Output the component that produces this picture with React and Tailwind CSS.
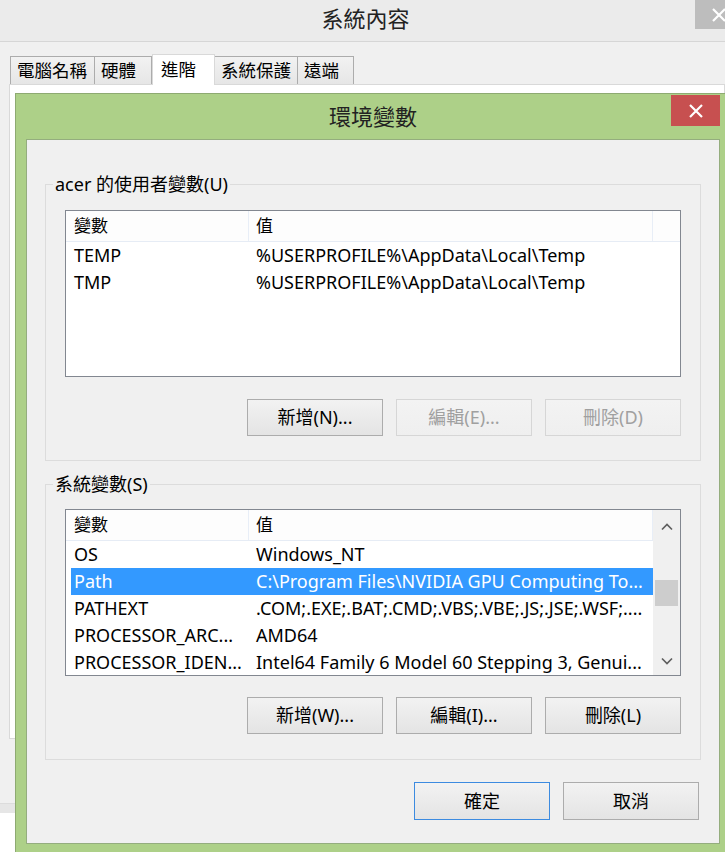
import React from "react";

const userVars = [
  { name: "TEMP", value: "%USERPROFILE%\\AppData\\Local\\Temp" },
  { name: "TMP", value: "%USERPROFILE%\\AppData\\Local\\Temp" },
];

const sysVars = [
  { name: "OS", value: "Windows_NT" },
  { name: "Path", value: "C:\\Program Files\\NVIDIA GPU Computing To...", selected: true },
  { name: "PATHEXT", value: ".COM;.EXE;.BAT;.CMD;.VBS;.VBE;.JS;.JSE;.WSF;...." },
  { name: "PROCESSOR_ARC...", value: "AMD64" },
  { name: "PROCESSOR_IDEN...", value: "Intel64 Family 6 Model 60 Stepping 3, Genui..." },
];

const tabs = ["電腦名稱", "硬體", "進階", "系統保護", "遠端"];
const tabWidths = ["w-[85px]", "w-[58px]", "w-[63px]", "w-[84px]", "w-[57px]"];

// thin white X used on both close buttons
const CloseX = () => (
  <svg width="14" height="14" viewBox="0 0 14 14">
    <path d="M1 1 L13 13 M13 1 L1 13" stroke="#fff" strokeWidth="2.2" fill="none" />
  </svg>
);

const Chevron = ({ down }) => (
  <svg width="12" height="8" viewBox="0 0 12 8">
    <path
      d={down ? "M1 1.5 L6 6.5 L11 1.5" : "M1 6.5 L6 1.5 L11 6.5"}
      stroke="#5f5f5f"
      strokeWidth="1.7"
      fill="none"
    />
  </svg>
);

const WinButton = ({ children, disabled, primary, tall }) => (
  <div
    className={
      "w-[136px] flex items-center justify-center text-[18px] border bg-gradient-to-b from-[#f2f2f2] to-[#e4e4e4] " +
      (tall ? "h-[38px] " : "h-[37px] ") +
      (primary
        ? "border-[#3c8be0] text-black"
        : disabled
        ? "border-[#d6d6d6] from-[#f3f3f3] to-[#efefef] text-[#a0a0a0]"
        : "border-[#acacac] text-black")
    }
  >
    {children}
  </div>
);

const ListHeader = ({ full }) => (
  <div className="flex h-[31px] shrink-0 bg-[#fdfdfd] border-b border-[#e6ecf5] text-[17px]">
    <div className="w-[183px] pl-[8px] flex items-center border-r border-[#e8eef7]">變數</div>
    <div className="w-[404px] pl-[7px] flex items-center border-r border-[#e8eef7]">值</div>
    {full && <div className="flex-1" />}
  </div>
);

const Row = ({ v }) => (
  <div
    className={
      "flex h-[27px] ml-[5px] w-[582px] items-center whitespace-nowrap " +
      (v.selected ? "bg-[#3399ff] text-white" : "")
    }
  >
    <div className="w-[178px] pl-[3px] overflow-hidden">{v.name}</div>
    <div className="flex-1 pl-[7px] overflow-hidden">{v.value}</div>
  </div>
);

const GroupBox = ({ label, children, className }) => (
  <div className={"relative border border-[#dcdcdc] pl-[19px] pr-[19px] " + className}>
    <span className="absolute left-[7px] top-[-12px] px-[2px] bg-[#f0f0f0] text-[18px] leading-[22px]">
      {label}
    </span>
    {children}
  </div>
);

export default function App() {
  return (
    <div className="relative w-[725px] h-[852px] overflow-hidden bg-white text-black font-['Noto_Sans','Noto_Sans_CJK_TC',sans-serif] text-[18px]">
      {/* background window: 系統內容 */}
      <div className="flex flex-col h-[813px] bg-[#f0f0f0]">
        <div className="relative h-[42px] shrink-0 bg-[#ebebeb] border-b border-[#d6d6d6] flex items-center justify-center">
          <span className="text-[22px] text-[#222] pb-[5px] pl-[6px]">系統內容</span>
          <div className="absolute right-[-17px] top-0 w-[47px] h-[29px] bg-[#bdbdbd] flex items-center justify-center">
            <CloseX />
          </div>
        </div>
        <div className="flex items-end h-[42px] shrink-0 pl-[10px] text-[17.5px]">
          {tabs.map((t, i) =>
            i === 2 ? (
              <div
                key={t}
                className={tabWidths[i] + " relative z-10 h-[31px] mb-[-1px] bg-white border border-b-0 border-[#d9d9d9] pl-[8px] pt-[1px]"}
              >
                {t}
              </div>
            ) : (
              <div
                key={t}
                className={tabWidths[i] + " h-[28px] bg-gradient-to-b from-[#f2f2f2] to-[#e6e6e6] border border-[#acacac] border-b-0 pl-[6px] flex items-center -ml-px first:ml-0"}
              >
                {t}
              </div>
            )
          )}
        </div>
        <div className="ml-[9px] h-[655px] shrink-0 bg-white border border-[#d9d9d9]" />
        <div className="flex-1" />
        <div className="h-[10px] shrink-0 bg-[#e6e6e6] border-t border-[#dcdcdc]" />
      </div>

      {/* foreground dialog: 環境變數 */}
      <div className="absolute left-[15px] top-[93px] w-[716px] h-[775px] bg-[#add088] border border-[#8eaa72] px-[10px]">
        <div className="relative h-[45px] flex items-center justify-center">
          <span className="text-[22px] text-[#222] pb-[1px]">環境變數</span>
          <div className="absolute right-0 top-[1px] w-[49px] h-[31px] bg-[#c75050] flex items-center justify-center">
            <CloseX />
          </div>
        </div>

        <div className="h-[705px] bg-[#f0f0f0] border border-[#94ad7e] pt-[44px] pl-[18px] pr-[18px]">
          <GroupBox label="acer 的使用者變數(U)" className="pt-[25px] pb-[24px]">
            <div className="h-[167px] bg-white border border-[#828790]">
              <ListHeader full />
              {userVars.map((v) => (
                <Row key={v.name} v={v} />
              ))}
            </div>
            <div className="flex justify-end gap-[13px] mt-[22px]">
              <WinButton>新增(N)...</WinButton>
              <WinButton disabled>編輯(E)...</WinButton>
              <WinButton disabled>刪除(D)</WinButton>
            </div>
          </GroupBox>

          <GroupBox label="系統變數(S)" className="mt-[23px] pt-[24px] pb-[25px]">
            <div className="h-[167px] bg-white border border-[#828790] flex">
              <div className="w-[587px] flex flex-col">
                <ListHeader />
                {sysVars.map((v) => (
                  <Row key={v.name} v={v} />
                ))}
              </div>
              <div className="flex-1 bg-[#f0f0f0] flex flex-col">
                <div className="h-[33px] flex items-center justify-center">
                  <Chevron />
                </div>
                <div className="h-[37px]" />
                <div className="h-[26px] mx-[2px] bg-[#cdcdcd]" />
                <div className="flex-1" />
                <div className="h-[28px] flex items-center justify-center">
                  <Chevron down />
                </div>
              </div>
            </div>
            <div className="flex justify-end gap-[13px] mt-[21px]">
              <WinButton>新增(W)...</WinButton>
              <WinButton>編輯(I)...</WinButton>
              <WinButton>刪除(L)</WinButton>
            </div>
          </GroupBox>

          <div className="flex justify-end gap-[13px] mt-[22px] pr-[2px]">
            <WinButton primary tall>確定</WinButton>
            <WinButton tall>取消</WinButton>
          </div>
        </div>
      </div>
    </div>
  );
}
